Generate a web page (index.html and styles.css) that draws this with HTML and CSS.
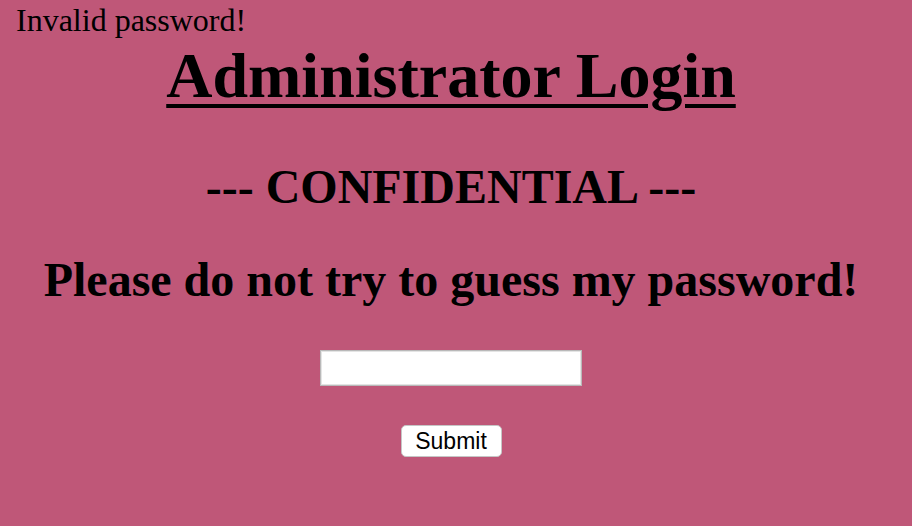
FILE: index.html
```html
<!DOCTYPE html>
<html>
<head>
<meta charset="utf-8">
<title>Administrator Login</title>
<link rel="stylesheet" href="styles.css">
</head>
<body>
<div class="msg">Invalid password!</div>
<h1 class="title">Administrator Login</h1>
<h2 class="conf">--- CONFIDENTIAL ---</h2>
<h2 class="warn">Please do not try to guess my password!</h2>
<form class="form">
<input class="pw" type="password">
<button class="submit" type="button">Submit</button>
</form>
</body>
</html>
```
FILE: styles.css
```css
html, body {
  margin: 0;
  padding: 0;
  background: #bf5778;
  height: 100%;
}
body {
  padding: 2px 26px 0 16px;
  box-sizing: border-box;
  font-family: "Liberation Serif", "Times New Roman", serif;
  color: #000;
  overflow: hidden;
}
.msg {
  font-size: 32px;
  line-height: 37px;
}
.title {
  font-size: 64px;
  font-weight: bold;
  text-decoration: underline;
  text-decoration-thickness: 4px;
  text-underline-offset: 7px;
  text-align: center;
  margin: 2px 0 0;
  line-height: 70px;
}
.conf, .warn {
  font-size: 48px;
  font-weight: bold;
  text-align: center;
  line-height: 54px;
  margin: 0;
}
.conf {
  margin-top: 49px;
}
.warn {
  margin-top: 39px;
}
.form {
  display: flex;
  flex-direction: column;
  align-items: center;
  margin: 43px 0 0;
}
.pw {
  box-sizing: border-box;
  width: 262px;
  height: 36px;
  margin: 0;
  padding: 0 4px;
  background: #fff;
  border: 1px solid #b9b9b9;
  box-shadow: inset 1px 1px 0 #e4e4e4, inset -1px -1px 0 #e4e4e4;
  outline: none;
}
.submit {
  box-sizing: border-box;
  width: 101px;
  height: 32px;
  margin-top: 39px;
  padding: 0;
  background: #fff;
  border: 1px solid #c6c6c6;
  border-radius: 5px;
  font-family: "Liberation Sans", Arial, sans-serif;
  font-size: 23px;
  color: #000;
  line-height: 1;
}
```
